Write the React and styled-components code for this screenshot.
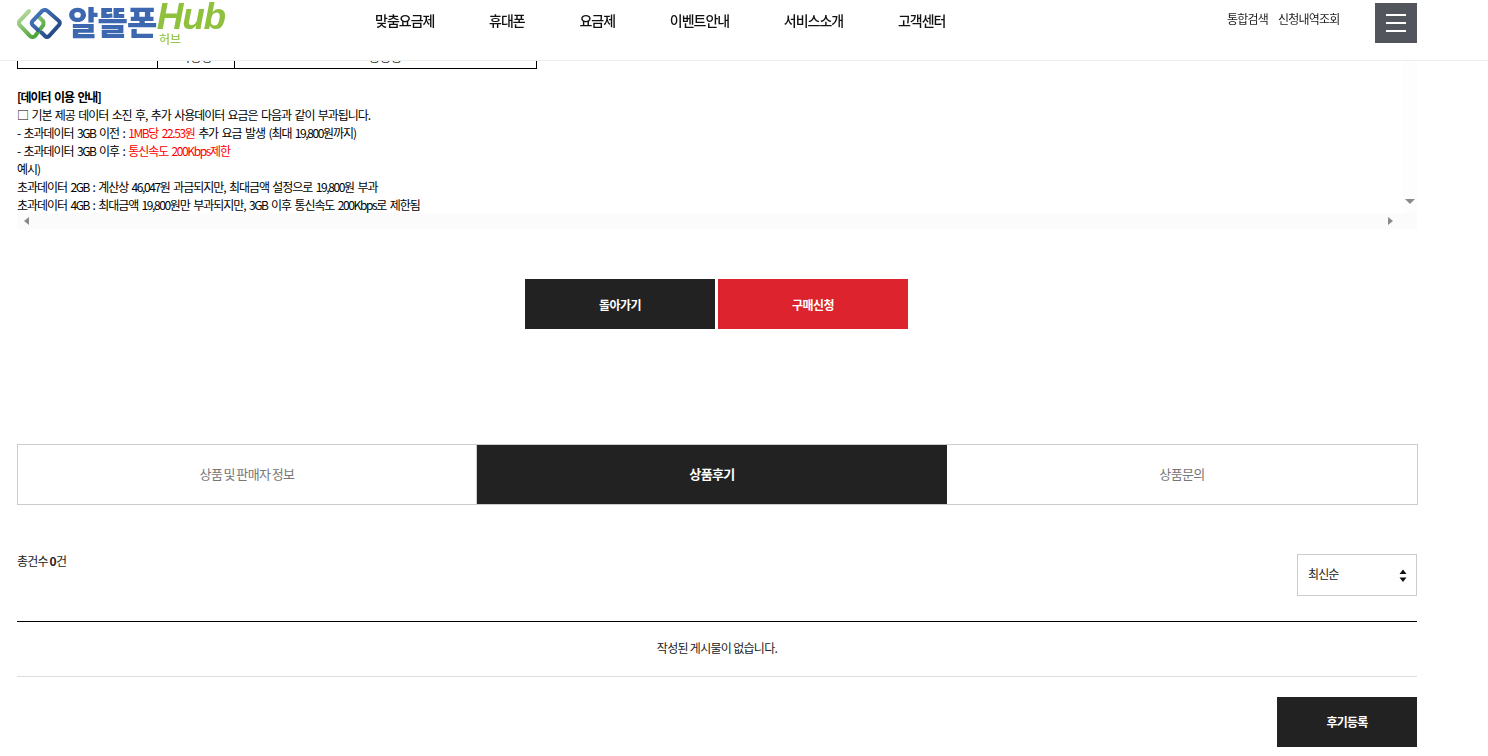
import React from 'react'
import styled, { createGlobalStyle } from 'styled-components'

const GlobalStyle = createGlobalStyle`
  html, body {
    margin: 0;
    padding: 0;
    background: #fff;
    overflow: hidden;
  }
  body {
    font-family: "Noto Sans CJK KR", "Noto Sans", sans-serif;
    color: #222;
  }
`

const Header = styled.header`
  position: fixed;
  top: 0;
  left: 0;
  right: 0;
  height: 60px;
  background: #fff;
  border-bottom: 1px solid #eee;
  display: flex;
  align-items: flex-start;
  z-index: 10;
`
const Logo = styled.a`
  width: 375px;
  padding-left: 17px;
  height: 46px;
  display: flex;
  align-items: flex-start;
  box-sizing: border-box;
`
const LogoWords = styled.div`
  margin-left: 6px;
  display: flex;
  align-items: flex-start;
  position: relative;
`
const LogoKorean = styled.span`
  font-size: 33px;
  line-height: 42px;
  font-weight: 900;
  color: #3d68b0;
  letter-spacing: -0.8px;
`
const LogoHub = styled.span`
  font-family: "Liberation Sans", sans-serif;
  font-size: 37px;
  line-height: 32px;
  margin-top: 1px;
  font-weight: 700;
  font-style: italic;
  color: #8fc13e;
  letter-spacing: -1.2px;
`
const LogoSub = styled.span`
  position: absolute;
  left: 91px;
  top: 33px;
  font-size: 12px;
  line-height: 12px;
  font-weight: 500;
  color: #9ac84f;
`
const Nav = styled.nav`
  display: flex;
  gap: 54.7px;
  width: 833px;
  padding-top: 10px;
`
const NavItem = styled.a`
  font-size: 14px;
  line-height: 21px;
  font-weight: 500;
  color: #111;
  letter-spacing: -1px;
`
const Utils = styled.div`
  display: flex;
  gap: 10px;
  width: 148px;
  padding-top: 10px;
  margin-left: 19px;
`
const UtilLink = styled.a`
  font-size: 12px;
  line-height: 18px;
  color: #222;
  letter-spacing: -0.8px;
`
const Burger = styled.button`
  width: 42px;
  height: 40px;
  margin-top: 3px;
  border: 0;
  padding: 0;
  background: #53555c;
  display: flex;
  flex-direction: column;
  justify-content: center;
  align-items: center;
  gap: 6px;
  span {
    display: block;
    width: 20px;
    height: 2px;
    background: #fff;
  }
`

const Main = styled.main`
  width: 1400px;
  margin-left: 17px;
  padding-top: 31px;
`
const ScrollBox = styled.div`
  display: grid;
  grid-template-columns: 1386px 14px;
  grid-template-rows: 182px 16px;
  height: 198px;
`
const ScrollContent = styled.div`
  overflow: hidden;
`
const VTrack = styled.div`
  background: #fdfdfd;
  position: relative;
`
const HTrack = styled.div`
  grid-column: 1 / 3;
  background: #fbfbfb;
  position: relative;
  display: flex;
  align-items: center;
  justify-content: space-between;
  padding: 0 24px 0 7px;
`
const Arrow = styled.i`
  display: block;
  width: 0;
  height: 0;
  border-style: solid;
  border-color: transparent;
  border-width: ${p => (p.$dir === 'down' ? '5px 5px 0' : '4.5px 0 4.5px 5px')};
  border-top-color: ${p => (p.$dir === 'down' ? '#8a8a8a' : 'transparent')};
  ${p => p.$dir === 'left' && 'border-width: 4.5px 5px 4.5px 0; border-right-color: #8a8a8a;'}
  ${p => p.$dir === 'right' && 'border-left-color: #8a8a8a;'}
`
const DownArrow = styled(Arrow)`
  position: absolute;
  left: 2px;
  bottom: 9px;
`
const InfoTable = styled.table`
  width: 520px;
  border-collapse: collapse;
  table-layout: fixed;
  margin-bottom: 19px;
  td {
    height: 37px;
    padding: 0 0 3px;
    box-sizing: border-box;
    border: 1px solid #000;
    text-align: center;
    font-size: 12px;
    line-height: 16px;
    vertical-align: bottom;
  }
`
const InfoLine = styled.p`
  margin: 0;
  font-size: 12px;
  line-height: 18px;
  height: 18px;
  letter-spacing: -1.05px;
  word-spacing: 1.8px;
  color: #000;
  white-space: nowrap;
  font-weight: ${p => (p.$bold ? 700 : 400)};
`
const Red = styled.span`
  color: #f00;
`
const Num = styled.span`
  letter-spacing: -1.4px;
`
const Actions = styled.div`
  display: flex;
  justify-content: center;
  gap: 3px;
  margin-top: 50px;
  padding-right: 1px;
`
const ActionButton = styled.button`
  width: 190px;
  height: 50px;
  border: 0;
  font-family: inherit;
  font-size: 12px;
  font-weight: 700;
  letter-spacing: -0.5px;
  color: #fff;
  background: ${p => (p.$primary ? '#dd232d' : '#222')};
`
const Tabs = styled.div`
  display: grid;
  grid-template-columns: 459px 470px 1fr;
  margin: 115px -1px 0 0;
  height: 61px;
  box-sizing: border-box;
  border: 1px solid #ccc;
`
const Tab = styled.a`
  display: flex;
  align-items: center;
  justify-content: center;
  font-size: 13px;
  letter-spacing: -0.6px;
  word-spacing: -1px;
  padding-bottom: 2px;
  font-weight: ${p => (p.$active ? 700 : 400)};
  color: ${p => (p.$active ? '#fff' : '#777')};
  background: ${p => (p.$active ? '#222' : '#fff')};
  &:first-child {
    border-right: 1px solid #ccc;
  }
`
const ListTop = styled.div`
  display: flex;
  justify-content: space-between;
  align-items: flex-start;
  margin-top: 49px;
  height: 67px;
  border-bottom: 1px solid #000;
`
const Total = styled.div`
  font-size: 12px;
  line-height: 14px;
  letter-spacing: -0.8px;
  color: #222;
  b {
    font-weight: 700;
  }
`
const SortBox = styled.div`
  width: 120px;
  height: 42px;
  box-sizing: border-box;
  border: 1px solid #ccc;
  display: flex;
  align-items: center;
  justify-content: space-between;
  padding: 0 8px 4px 10px;
  font-size: 12px;
  letter-spacing: -0.9px;
  color: #222;
  svg {
    margin-top: 4px;
  }
`
const Empty = styled.div`
  height: 55px;
  box-sizing: border-box;
  padding-bottom: 3px;
  border-bottom: 1px solid #ddd;
  display: flex;
  align-items: center;
  justify-content: center;
  font-size: 12px;
  letter-spacing: -0.7px;
  color: #222;
`
const Footer = styled.div`
  display: flex;
  justify-content: flex-end;
  margin-top: 20px;
`
const WriteButton = styled.button`
  width: 140px;
  height: 50px;
  border: 0;
  padding: 0 0 2px;
  background: #222;
  color: #fff;
  font-family: inherit;
  font-size: 12px;
  font-weight: 700;
  letter-spacing: -0.8px;
`

const LogoMark = () => (
  <svg width="45" height="32" viewBox="0 0 45 32" style={{ marginTop: 8 }}>
    <defs>
      <linearGradient id="gr" x1="0" y1="0" x2="0.6" y2="1">
        <stop offset="0" stopColor="#c5e0aa" />
        <stop offset="1" stopColor="#4ba53a" />
      </linearGradient>
      <linearGradient id="bl" x1="0" y1="0" x2="1" y2="1">
        <stop offset="0" stopColor="#4a7cc4" />
        <stop offset="1" stopColor="#1f3f7a" />
      </linearGradient>
    </defs>
    <path d="M12 3 L2.5 13 Q1 15 2.5 17 L13 28 Q15.5 30 18 28 L26 17.5 Q27 15 26 13 L22 9" fill="none" stroke="url(#gr)" strokeWidth="4" strokeLinecap="round" />
    <path d="M21 22 L15.5 17 Q14 15 15.5 13 L25 3 Q28 1 30.5 3 L42 13 Q43.5 15 42 17 L32 28 Q30 30 28 28 L24.5 24.5" fill="none" stroke="url(#bl)" strokeWidth="4" strokeLinecap="round" />
  </svg>
)

const navItems = ['맞춤요금제', '휴대폰', '요금제', '이벤트안내', '서비스소개', '고객센터']

export default function App() {
  return (
    <>
      <GlobalStyle />
      <Header>
        <Logo>
          <LogoMark />
          <LogoWords>
            <LogoKorean>알뜰폰</LogoKorean>
            <LogoHub>Hub</LogoHub>
            <LogoSub>허브</LogoSub>
          </LogoWords>
        </Logo>
        <Nav>
          {navItems.map(item => <NavItem key={item}>{item}</NavItem>)}
        </Nav>
        <Utils>
          <UtilLink>통합검색</UtilLink>
          <UtilLink>신청내역조회</UtilLink>
        </Utils>
        <Burger aria-label="menu"><span /><span /><span /></Burger>
      </Header>
      <Main>
        <ScrollBox>
          <ScrollContent>
            <InfoTable>
              <colgroup>
                <col width="140" />
                <col width="77" />
                <col />
              </colgroup>
              <tbody>
                <tr>
                  <td></td>
                  <td>사용량</td>
                  <td>공공공</td>
                </tr>
              </tbody>
            </InfoTable>
            <InfoLine $bold>[데이터 이용 안내]</InfoLine>
            <InfoLine>□ 기본 제공 데이터 소진 후, 추가 사용데이터 요금은 다음과 같이 부과됩니다.</InfoLine>
            <InfoLine>- 초과데이터 <Num>3GB</Num> 이전 : <Red><Num>1MB</Num>당 <Num>22.53</Num>원</Red> 추가 요금 발생 (최대 <Num>19,800</Num>원까지)</InfoLine>
            <InfoLine>- 초과데이터 <Num>3GB</Num> 이후 : <Red>통신속도 <Num>200Kbps</Num>제한</Red></InfoLine>
            <InfoLine>예시)</InfoLine>
            <InfoLine>초과데이터 <Num>2GB</Num> : 계산상 <Num>46,047</Num>원 과금되지만, 최대금액 설정으로 <Num>19,800</Num>원 부과</InfoLine>
            <InfoLine>초과데이터 <Num>4GB</Num> : 최대금액 <Num>19,800</Num>원만 부과되지만, <Num>3GB</Num> 이후 통신속도 <Num>200Kbps</Num>로 제한됨</InfoLine>
          </ScrollContent>
          <VTrack><DownArrow $dir="down" /></VTrack>
          <HTrack><Arrow $dir="left" /><Arrow $dir="right" /></HTrack>
        </ScrollBox>
        <Actions>
          <ActionButton>돌아가기</ActionButton>
          <ActionButton $primary>구매신청</ActionButton>
        </Actions>
        <Tabs>
          <Tab>상품 및 판매자 정보</Tab>
          <Tab $active>상품후기</Tab>
          <Tab>상품문의</Tab>
        </Tabs>
        <ListTop>
          <Total>총건수 <b>0</b>건</Total>
          <SortBox>
            최신순
            <svg width="10" height="15" viewBox="0 0 10 15">
              <path d="M5 1.5 L8.5 6 H1.5 Z M5 14 L1.5 9.5 H8.5 Z" fill="#111" />
            </svg>
          </SortBox>
        </ListTop>
        <Empty>작성된 게시물이 없습니다.</Empty>
        <Footer>
          <WriteButton>후기등록</WriteButton>
        </Footer>
      </Main>
    </>
  )
}
